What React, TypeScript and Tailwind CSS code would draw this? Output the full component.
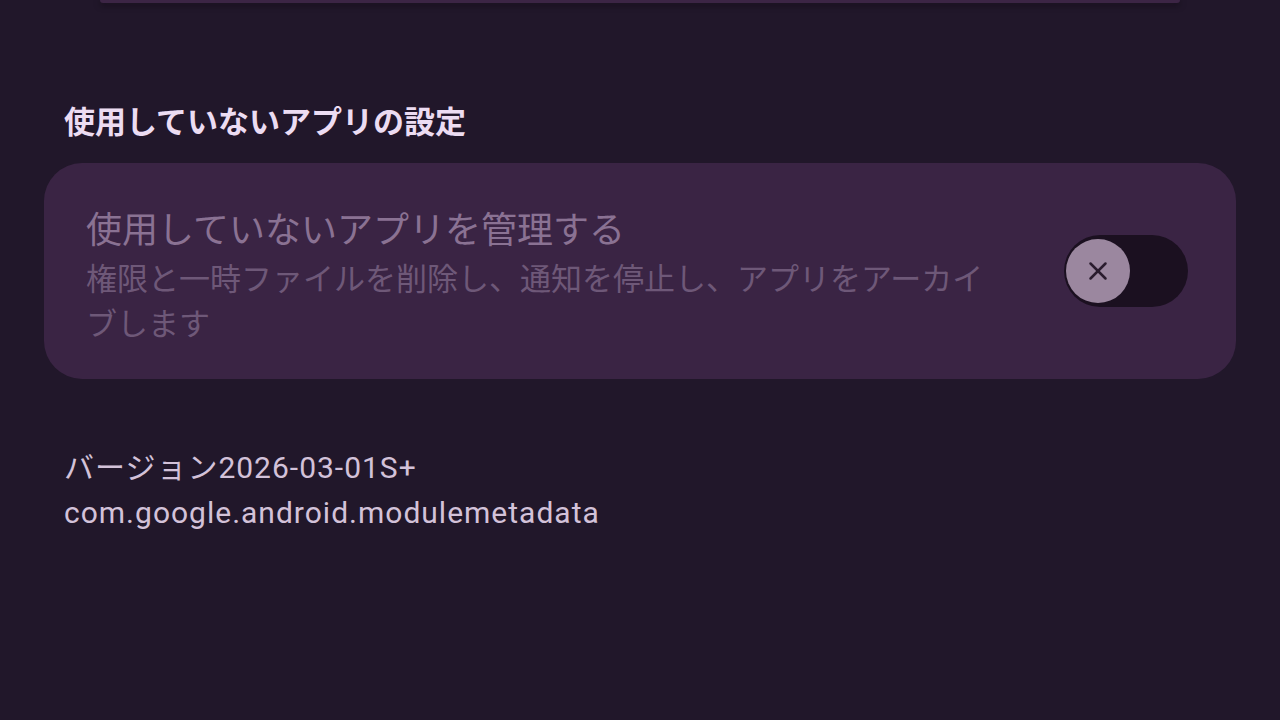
import { X } from "lucide-react"

const font = { fontFamily: 'Roboto, "Noto Sans CJK JP", sans-serif' }

const UnusedAppsToggle = () => (
  <div className="flex items-center justify-between rounded-[38px] bg-[#3a2444] pl-[42px] pr-[48px] pt-[42px] pb-[32px]">
    <div className="w-[912px]">
      <div className="text-[36px] leading-[52px] text-[#8a7293]">使用していないアプリを管理する</div>
      <div className="text-[31px] leading-[45px] text-[#6e5878]">
        権限と一時ファイルを削除し、通知を停止し、アプリをアーカイブします
      </div>
    </div>
    <div className="mb-[10px] flex h-[72px] w-[124px] shrink-0 items-center rounded-full bg-[#1b1020] px-[2px]">
      <div className="flex h-[64px] w-[64px] items-center justify-center rounded-full bg-[#9b879f]">
        <X className="h-[30px] w-[30px] text-[#2a1c2e]" strokeWidth={2} />
      </div>
    </div>
  </div>
)

export default function App() {
  return (
    <div className="h-[720px] w-[1280px] overflow-hidden bg-[#21172a]" style={font}>
      <div className="mx-[100px] h-[3px] rounded-b-[4px] bg-[#3c2545] shadow-[0_2px_6px_rgba(10,5,12,0.6)]" />
      <div className="px-[44px]">
        <div className="pl-[20px] pt-[99px] text-[31px] font-bold leading-[42px] text-[#ecdcf2]">
          使用していないアプリの設定
        </div>
        <div className="mt-[19px]">
          <UnusedAppsToggle />
        </div>
        <div className="pl-[20px] pt-[66px] text-[30px] leading-[45px] tracking-[1px] text-[#d3c2d9]">
          <div>バージョン2026-03-01S+</div>
          <div>com.google.android.modulemetadata</div>
        </div>
      </div>
    </div>
  )
}
